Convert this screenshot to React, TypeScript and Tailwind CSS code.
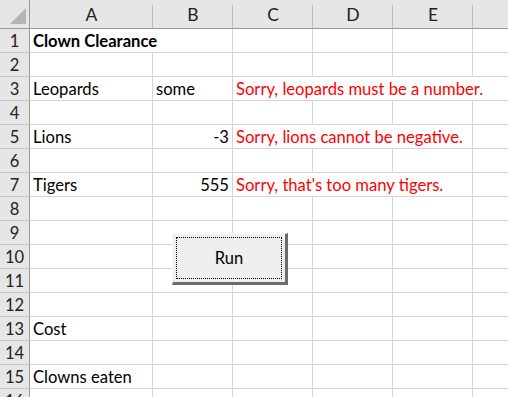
type Cell = {
  text?: string;
  span?: number;
  align?: "left" | "right";
  red?: boolean;
  bold?: boolean;
};

// column widths, each including its 1px right gridline
const widths = [123, 80, 80, 80, 80, 80];
const letters = ["A", "B", "C", "D", "E", ""];

const rows: Record<number, Cell[]> = {
  1: [{ text: "Clown Clearance", span: 2, bold: true }, {}, {}, {}, {}],
  3: [
    { text: "Leopards" },
    { text: "some" },
    { text: "Sorry, leopards must be a number.", span: 4, red: true },
  ],
  5: [
    { text: "Lions" },
    { text: "-3", align: "right" },
    { text: "Sorry, lions cannot be negative.", span: 3, red: true },
    {},
  ],
  7: [
    { text: "Tigers" },
    { text: "555", align: "right" },
    { text: "Sorry, that's too many tigers.", span: 3, red: true },
    {},
  ],
  13: [{ text: "Cost" }, {}, {}, {}, {}, {}],
  15: [{ text: "Clowns eaten" }, {}, {}, {}, {}, {}],
};

function cellsFor(n: number): Cell[] {
  return rows[n] ?? [{}, {}, {}, {}, {}, {}];
}

function Row({ n }: { n: number }) {
  let col = 0;
  return (
    <div className="flex h-[24px] shrink-0">
      <div className="flex w-[30px] shrink-0 items-end justify-center border-r border-b border-r-[#9b9b9b] border-b-[#c8c8c8] bg-[#e6e6e6] pb-[1px] text-[16.5px] leading-[20px] text-[#222]">
        {n}
      </div>
      {cellsFor(n).map((c, i) => {
        const span = c.span ?? 1;
        const w = widths.slice(col, col + span).reduce((a, b) => a + b, 0);
        col += span;
        return (
          <div
            key={i}
            style={{ width: w }}
            className={`flex shrink-0 items-end overflow-visible whitespace-nowrap border-r border-b border-[#d4d4d4] px-[3px] pb-[1px] text-[16.6px] leading-[20px] ${
              c.align === "right" ? "justify-end" : "justify-start"
            } ${c.red ? "text-[#ff0000]" : "text-black"} ${c.bold ? "font-bold" : ""}`}
          >
            {c.text}
          </div>
        );
      })}
    </div>
  );
}

export default function App() {
  const nums = Array.from({ length: 16 }, (_, i) => i + 1);
  return (
    <div className="relative h-[397px] w-[508px] overflow-hidden bg-white font-['Lato',sans-serif]">
      <div className="flex h-[29px] shrink-0 border-b border-[#9b9b9b] bg-[#e6e6e6]">
        <div className="relative w-[30px] shrink-0 border-r border-[#9b9b9b]">
          <svg className="absolute left-[10px] top-[8px]" width="16" height="16" viewBox="0 0 16 16">
            <polygon points="16,0 16,16 0,16" fill="#b4b4b4" />
          </svg>
        </div>
        {letters.map((l, i) => (
          <div
            key={i}
            style={{ width: widths[i] }}
            className="relative flex shrink-0 items-center justify-center pt-[2px] text-[17.5px] text-[#222]"
          >
            {l}
            <span className="absolute right-0 top-[5px] bottom-0 w-px bg-[#bdbdbd]" />
          </div>
        ))}
      </div>
      {nums.map((n) => (
        <Row key={n} n={n} />
      ))}

      <button className="absolute left-[172px] top-[233px] flex h-[52px] w-[116px] border-t border-l border-t-[#fafafa] border-l-[#fafafa] border-r-[3px] border-b-[3px] border-r-[#6b6b6b] border-b-[#6b6b6b] bg-[#efefef] p-[3px]">
        <span className="flex h-full w-full items-center justify-center border border-dotted border-black text-[16.5px] text-black">
          Run
        </span>
      </button>
    </div>
  );
}
